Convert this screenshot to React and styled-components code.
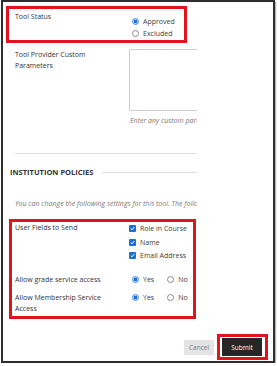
import React from 'react'
import styled, { createGlobalStyle } from 'styled-components'

const GlobalStyle = createGlobalStyle`
  html, body {
    margin: 0;
    padding: 0;
    background: #ffffff;
  }

  body {
    font-family: "Open Sans", "Liberation Sans", sans-serif;
    color: #333333;
  }
`

const Frame = styled.div`
  box-sizing: border-box;
  width: 274px;
  height: 363px;
  margin-left: 1px;
  border: 2px solid #2e2e2e;
  box-shadow: 1px 2px 1px #b8b8b8;
  display: flex;
  flex-direction: column;
  overflow: hidden;
`

const Content = styled.div`
  width: 194px;
  overflow: hidden;
  display: flex;
  flex-direction: column;
  --row-pad: 12px;
`

const Highlight = styled.div`
  box-sizing: border-box;
  width: ${p => p.$width}px;
  margin: ${p => p.$top}px 0 0 ${p => p.$inset}px;
  padding-bottom: ${p => p.$bottom}px;
  border: 3px solid #e3121c;
  --row-pad: ${p => 9 - p.$inset}px;
`

const Row = styled.div`
  display: flex;
  align-items: flex-start;
  padding-left: var(--row-pad);
  padding-top: ${p => p.$padTop || 0}px;
  margin-top: ${p => p.$gap || 0}px;
`

const Label = styled.div`
  width: 114px;
  flex: 0 0 114px;
  font-size: 7px;
  line-height: 11px;
  color: #333333;
`

const Controls = styled.div`
  display: flex;
  flex-direction: ${p => (p.$inline ? 'row' : 'column')};
  gap: ${p => (p.$inline ? 10 : 0)}px;
  margin-top: ${p => p.$offset || 0}px;
  min-width: 0;
`

const Option = styled.label`
  display: flex;
  align-items: center;
  height: ${p => p.$height || 12}px;
  font-size: 7px;
  color: #404040;
  white-space: nowrap;
`

const RadioMark = styled.span`
  box-sizing: border-box;
  width: 7px;
  height: 7px;
  margin: 0 4px 0 3px;
  border-radius: 50%;
  border: 1px solid ${p => (p.$checked ? '#4a90e2' : '#8a8a8a')};
  background: ${p => (p.$checked ? 'radial-gradient(circle, #1a6fd6 0 1.6px, #bcd8f7 2px)' : '#ffffff')};
`

const CheckMark = styled.span`
  box-sizing: border-box;
  width: 7px;
  height: 7px;
  margin-right: 4px;
  border-radius: 1px;
  background: #1c6fd4;
  display: flex;
  align-items: center;
  justify-content: center;
`

const TextBox = styled.div`
  box-sizing: border-box;
  width: 80px;
  height: 62px;
  border: 1px solid #cfcfcf;
  background: #ffffff;
`

const Hint = styled.div`
  margin-top: ${p => p.$gap || 0}px;
  padding-left: ${p => p.$indent || 0}px;
  font-size: 7px;
  line-height: 11px;
  font-style: italic;
  color: #7a7a7a;
  white-space: nowrap;
`

const Divider = styled.div`
  height: 1px;
  margin: 27px 0 0 12px;
  background: #dedede;
`

const Heading = styled.div`
  display: flex;
  align-items: center;
  margin-top: 13px;
  padding-left: 7px;
  font-size: 7.5px;
  line-height: 11px;
  font-weight: 700;
  color: #333333;
  white-space: nowrap;

  &::after {
    content: '';
    flex: 1;
    height: 1px;
    margin-left: 9px;
    background: #dedede;
  }
`

const Actions = styled.div`
  display: flex;
  justify-content: flex-end;
  align-items: center;
  margin-top: 15px;
  padding-right: 5px;
`

const Button = styled.div`
  box-sizing: border-box;
  display: flex;
  align-items: center;
  justify-content: center;
  font-size: 6.5px;
  white-space: nowrap;
  width: ${p => p.$width}px;
  height: ${p => p.$height}px;
  background: ${p => (p.$primary ? '#262626' : '#e4e4e4')};
  color: ${p => (p.$primary ? '#ffffff' : '#7a7a7a')};
`

const ButtonRing = styled.div`
  box-sizing: border-box;
  margin-left: 3px;
  padding: 1px 3px 1px 2px;
  border: 3px solid #e3121c;
`

const Radio = ({ checked, children }) => (
  <Option>
    <RadioMark $checked={checked} />
    {children}
  </Option>
)

const Check = ({ children }) => (
  <Option $height={13.5}>
    <CheckMark>
      <svg width='5' height='5' viewBox='0 0 10 10'>
        <path d='M1.5 5.2 L4 7.6 L8.6 2.4' fill='none' stroke='#ffffff' strokeWidth='2' />
      </svg>
    </CheckMark>
    {children}
  </Option>
)

export default function App () {
  return (
    <>
      <GlobalStyle />
      <Frame>
        <Content>
          <Highlight $width={181} $top={4} $inset={3} $bottom={1}>
            <Row $padTop={2}>
              <Label>Tool Status</Label>
              <Controls $offset={4}>
                <Radio checked>Approved</Radio>
                <Radio>Excluded</Radio>
              </Controls>
            </Row>
          </Highlight>

          <Row $gap={6}>
            <Label>Tool Provider Custom<br />Parameters</Label>
            <Controls>
              <TextBox />
              <Hint $gap={4} $indent={1}>Enter any custom parameters required by the tool provider.</Hint>
            </Controls>
          </Row>

          <Divider />
          <Heading>INSTITUTION POLICIES</Heading>
          <Hint $gap={20} $indent={12}>You can change the following settings for this tool. The following settings apply.</Hint>

          <Highlight $width={187} $top={10} $inset={6} $bottom={2.5}>
            <Row>
              <Label>User Fields to Send</Label>
              <Controls>
                <Check>Role in Course</Check>
                <Check>Name</Check>
                <Check>Email Address</Check>
              </Controls>
            </Row>
            <Row $gap={11}>
              <Label>Allow grade service access</Label>
              <Controls $inline>
                <Radio checked>Yes</Radio>
                <Radio>No</Radio>
              </Controls>
            </Row>
            <Row $gap={6}>
              <Label>Allow Membership Service<br />Access</Label>
              <Controls $inline>
                <Radio checked>Yes</Radio>
                <Radio>No</Radio>
              </Controls>
            </Row>
          </Highlight>
        </Content>

        <Actions>
          <Button $width={30} $height={15}>Cancel</Button>
          <ButtonRing>
            <Button $primary $width={40} $height={18}>Submit</Button>
          </ButtonRing>
        </Actions>
      </Frame>
    </>
  )
}
